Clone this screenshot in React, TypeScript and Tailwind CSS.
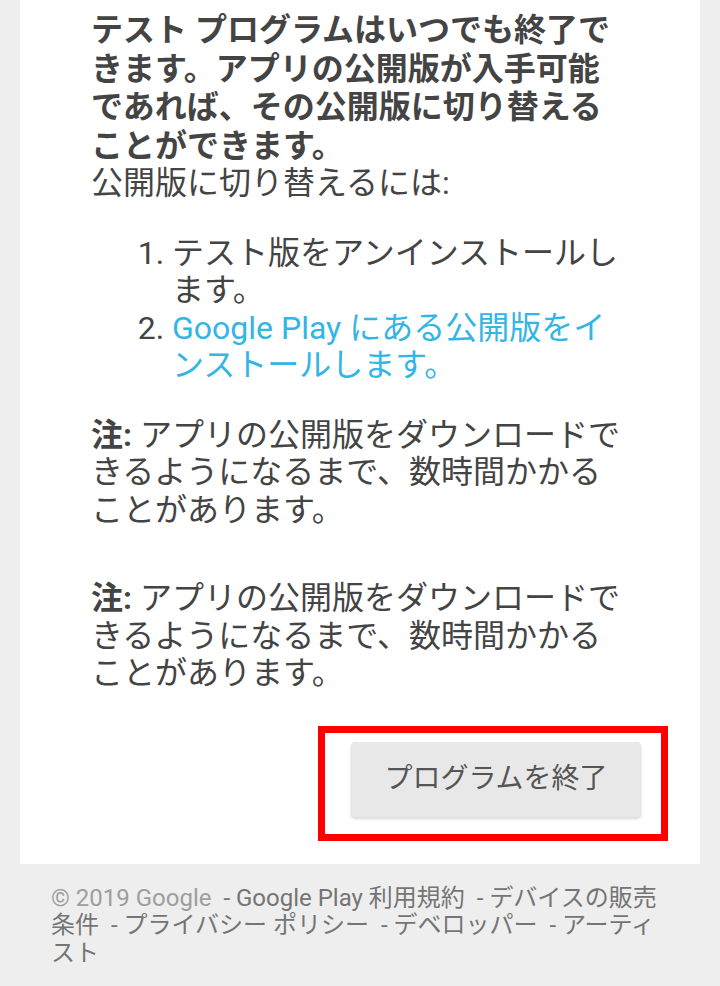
import React from 'react';

const FONT = "font-['Roboto','Noto_Sans_CJK_JP',sans-serif]";

const FOOTER_LINKS = [
  'Google Play 利用規約',
  'デバイスの販売条件',
  'プライバシー ポリシー',
  'デベロッパー',
  'アーティスト',
];

const Note = ({ className = '' }: { className?: string }) => (
  <p className={`text-[32px] leading-[37.5px] text-[#444] ${className}`}>
    <b className="font-bold">注:</b> アプリの公開版をダウンロードできるようになるまで、数時間かかることがあります。
  </p>
);

export default function App() {
  return (
    <div className={`min-h-screen bg-[#eeeeee] ${FONT}`}>
      <div className="mx-[20px] bg-white">
        <div className="pl-[71px] pr-[77px] pt-[11px]">
          <p className="text-[32px] leading-[38.5px] font-bold text-[#444]">
            テスト プログラムはいつでも終了できます。アプリの公開版が入手可能であれば、その公開版に切り替えることができます。
          </p>
          <p className="text-[32px] leading-[37.5px] text-[#444]">公開版に切り替えるには:</p>

          <ol className="mt-[32px] list-decimal pl-[81px] text-[32px] leading-[37.5px] text-[#444]">
            <li>テスト版をアンインストールします。</li>
            <li>
              <a href="#" className="text-[#33b5e5]">Google Play にある公開版をインストールします。</a>
            </li>
          </ol>

          <Note className="mt-[32px]" />
          <Note className="mt-[51px]" />
        </div>

        {/* red box = annotation around the leave button */}
        <div className="flex justify-end pr-[32px] pt-[33px] pb-[23px]">
          <div className="border-[7px] border-[#ff0000] pl-[26px] pr-[20px] pt-[9px] pb-[17px]">
            <button className="flex h-[75px] w-[290px] items-center justify-center rounded-[4px] bg-[#e8e8e8] text-[28px] text-[#555] shadow-[0_2px_3px_rgba(0,0,0,0.15)]">
              プログラムを終了
            </button>
          </div>
        </div>
      </div>

      <footer className="pl-[51px] pr-[60px] pt-[21px] pb-[30px] text-[24px] leading-[27.5px]">
        <span className="text-[#9e9e9e]">© 2019 Google</span>
        {FOOTER_LINKS.map((label) => (
          <span key={label} className="text-[#757575]">
            {'\u00a0 - '}
            <a href="#">{label}</a>
          </span>
        ))}
      </footer>
    </div>
  );
}
